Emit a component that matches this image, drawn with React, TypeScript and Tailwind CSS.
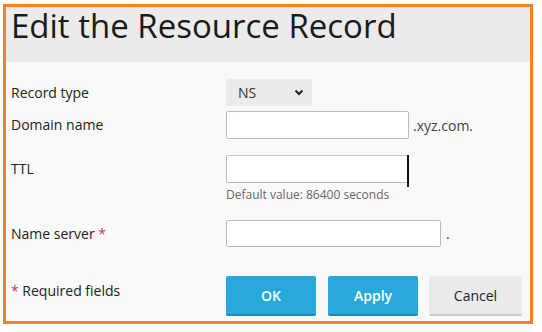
import React from "react";

export default function App() {
  return (
    <div
      className="w-[542px] h-[332px] bg-white pt-[4px] pl-[3px]"
      style={{ fontFamily: '"Open Sans", "Liberation Sans", sans-serif' }}
    >
      <div className="w-[530px] h-[320px] border-[3px] border-[#f7802b] bg-[#f9f9f9] flex flex-col">
        <div className="h-[55px] bg-[#ebebeb] pl-[5px] flex items-start">
          <h1 className="text-[33px] leading-[36px] mt-[1px] text-[#1a1a1a] font-normal tracking-[0px]">
            Edit the Resource Record
          </h1>
        </div>
        <div className="pl-[5px] flex flex-col text-[14px] text-[#222]">
          {/* Record type */}
          <div className="flex items-center mt-[17px] h-[27px]">
            <div className="w-[215px] leading-[20px]">Record type</div>
            <div className="w-[86px] h-[27px] bg-[#ebebeb] rounded-[2px] flex items-center justify-between pl-[12px] pr-[8px]">
              <span className="text-[14px] text-[#333]">NS</span>
              <svg width="10" height="7" viewBox="0 0 10 7">
                <path d="M1.5 1.5 L5 5 L8.5 1.5" fill="none" stroke="#222" strokeWidth="2" />
              </svg>
            </div>
          </div>
          {/* Domain name */}
          <div className="flex items-center mt-[5px] h-[28px]">
            <div className="w-[215px] leading-[20px]">Domain name</div>
            <div className="w-[183px] h-[28px] bg-white border border-[#b9b9b9] rounded-[2px]" />
            <span className="ml-[4px] text-[#444]">.xyz.com.</span>
          </div>
          {/* TTL */}
          <div className="flex items-start mt-[16px]">
            <div className="w-[215px] leading-[20px] mt-[4px]">TTL</div>
            <div className="flex flex-col">
              <div className="relative w-[183px] h-[28px] bg-white border border-[#b9b9b9] border-t-[#c8c8c8] rounded-[2px]">
                <div className="absolute right-[-1px] top-[-1px] w-[2px] h-[32px] bg-[#111]" />
              </div>
              <div className="text-[12px] leading-[16px] mt-[4px] text-[#666]">
                Default value: 86400 seconds
              </div>
            </div>
          </div>
          {/* Name server */}
          <div className="flex items-center mt-[17px] h-[27px]">
            <div className="w-[215px] leading-[20px]">
              Name server <span className="text-[#d0344c]">*</span>
            </div>
            <div className="w-[215px] h-[27px] bg-white border border-[#b9b9b9] rounded-[2px]" />
            <span className="ml-[5px] text-[#444]">.</span>
          </div>
          {/* Footer */}
          <div className="flex items-start mt-[29px]">
            <div className="w-[215px] leading-[20px] mt-[5px]">
              <span className="text-[#d0344c]">*</span> Required fields
            </div>
            <div className="flex">
              <button className="w-[90px] h-[40px] bg-[#29a8dc] border-b-[2px] border-[#1f88b5] rounded-[2px] text-white font-semibold text-[14px]">
                OK
              </button>
              <button className="ml-[12px] w-[90px] h-[40px] bg-[#29a8dc] border-b-[2px] border-[#1f88b5] rounded-[2px] text-white font-semibold text-[14px]">
                Apply
              </button>
              <button className="ml-[11px] w-[93px] h-[40px] bg-[#ebebeb] border-b-[2px] border-[#c9c9c9] rounded-[2px] text-[#222] text-[14px]">
                Cancel
              </button>
            </div>
          </div>
        </div>
      </div>
    </div>
  );
}
